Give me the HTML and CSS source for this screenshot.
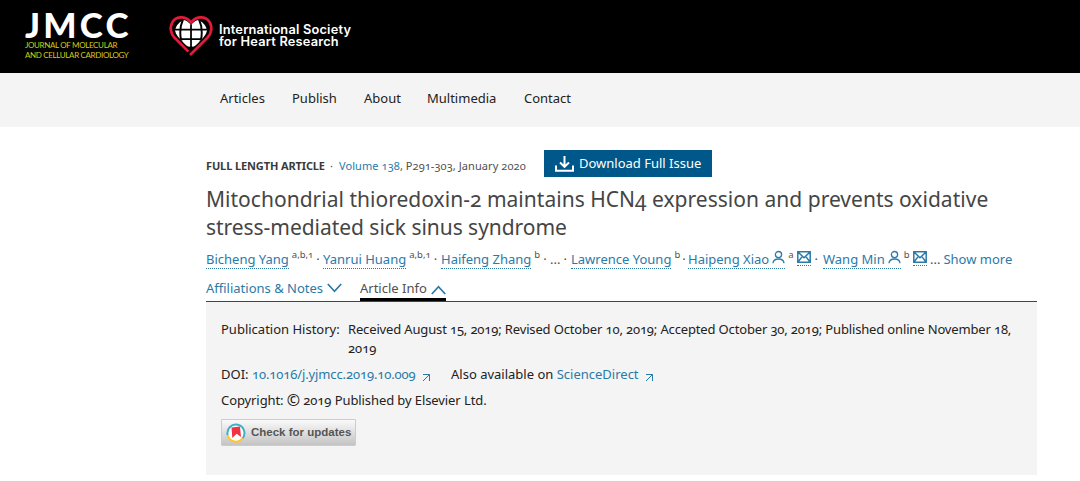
FILE: index.html
```html
<!DOCTYPE html>
<html lang="en">
<head>
    <meta charset="UTF-8">
    <title>Mitochondrial thioredoxin-2 maintains HCN4 expression - JMCC</title>
    <link rel="stylesheet" href="styles.css">
</head>
<body>
    <svg class="sprite" aria-hidden="true">
        <symbol id="icon-person" viewBox="0 0 13 14">
            <circle cx="6.5" cy="4.6" r="3.1" />
            <path d="M1 13.2c.2-3 2.200-4.200 5.500-4.200s5.300 1.200 5.500 4.200" />
        </symbol>
        <symbol id="icon-mail" viewBox="0 0 14 12">
            <path d="M.8.8h12.400v10.400H.800zM1 1l6 5.800L13 1M1 11l4.300-5.600M13 11L8.700 5.400" />
        </symbol>
        <symbol id="icon-out" viewBox="0 0 9 9">
            <path d="M1 1.500h6.500V8M7.500 1.500L1 8" />
        </symbol>
    </svg>

    <header class="header">
        <a class="jmcc" href="#">
            <span class="jmcc-name">JMCC</span>
            <span class="jmcc-line">JOURNAL OF MOLECULAR</span>
            <span class="jmcc-line">AND CELLULAR CARDIOLOGY</span>
        </a>
        <a class="society" href="#">
            <svg class="heart" viewBox="0 0 46 42">
                <defs>
                    <clipPath id="globe">
                        <path d="M14 5c3 0 6 2 8.500 5C25 7 28 5 31 5c5 0 8 3 8 9 0 7-7 12.500-16.500 21.500C13 26.500 6 21 6 14c0-6 3-9 8-9z" />
                    </clipPath>
                </defs>
                <g clip-path="url(#globe)">
                    <ellipse cx="22.500" cy="18" rx="16.500" ry="14.500" fill="#fff" />
                    <path d="M22.500 2v36M4 15h37M4 24.800h37" />
                    <ellipse class="meridian" cx="22.500" cy="18" rx="11" ry="20" />
                </g>
                <path class="outline" d="M19.800 37.500L5.500 23C1.500 19 .8 12.500 3 8.200 6.500 1.200 16 .2 22.500 7.500 29 .2 38.500 1.200 42 8.200c2.300 4.300 1.500 10.800-2.500 14.800L21.500 41" />
            </svg>
            <span class="society-name"><span>International Society</span><span>for Heart Research</span></span>
        </a>
    </header>

    <nav class="nav">
        <a class="n1" href="#">Articles</a>
        <a class="n2" href="#">Publish</a>
        <a class="n3" href="#">About</a>
        <a class="n4" href="#">Multimedia</a>
        <a class="n5" href="#">Contact</a>
    </nav>

    <main class="article">
        <div class="meta">
            <strong>FULL LENGTH ARTICLE</strong>
            <span class="dot">·</span>
            <span class="issue"><a href="#">Volume 138</a>, P291-303, January 2020</span>
            <a class="download" href="#">
                <svg width="19" height="16" viewBox="0 0 19 16"><path d="M9.500 0v10.500M5 6.500l4.500 4.300L14 6.500M1 9.500v5.200h17V9.500" /></svg>
                <span>Download Full Issue</span>
            </a>
        </div>

        <h1><span class="title-one">Mitochondrial thioredoxin-2 maintains HCN4 expression and prevents oxidative</span> <span class="title-two">stress-mediated sick sinus syndrome</span></h1>

        <div class="authors">
            <span class="author a1"><a href="#">Bicheng Yang</a><sup>a,b,1</sup><i>·</i></span>
            <span class="author a2"><a href="#">Yanrui Huang</a><sup>a,b,1</sup><i>·</i></span>
            <span class="author a3"><a href="#">Haifeng Zhang</a><sup>b</sup><i>·</i></span>
            <span class="author a4">...<i>·</i></span>
            <span class="author a5"><a href="#">Lawrence Young</a><sup>b</sup><i>·</i></span>
            <span class="author a6"><a href="#">Haipeng Xiao<svg class="person"><use href="#icon-person" /></svg></a><sup>a</sup><a class="mail" href="#"><svg><use href="#icon-mail" /></svg></a><i>·</i></span>
            <span class="author a7"><a href="#">Wang Min<svg class="person"><use href="#icon-person" /></svg></a><sup>b</sup><a class="mail" href="#"><svg><use href="#icon-mail" /></svg></a></span>
            <span class="author a8">... <a class="more" href="#">Show more</a></span>
        </div>

        <div class="tabs">
            <a class="tab" href="#">Affiliations &amp; Notes<svg viewBox="0 0 15 10"><path d="M.8 1l6.700 7.300L14.200 1" /></svg></a>
            <a class="tab active" href="#">Article Info<svg viewBox="0 0 15 10"><path d="M.8 9l6.700-7.300L14.200 9" /></svg></a>
        </div>

        <section class="info">
            <div class="history">
                <span class="label">Publication History:</span>
                <span class="dates"><span class="dates-line">Received August 15, 2019; Revised October 10, 2019; Accepted October 30, 2019; Published online November 18,</span> 2019</span>
            </div>
            <div class="doi">
                <span class="doi-link">DOI: <a href="#">10.1016/j.yjmcc.2019.10.009</a><svg><use href="#icon-out" /></svg></span>
                <span class="direct">Also available on <a href="#">ScienceDirect</a><svg><use href="#icon-out" /></svg></span>
            </div>
            <div class="copyright">Copyright: <span class="sign">©</span> 2019 Published by Elsevier Ltd.</div>
            <a class="updates" href="#">
                <svg width="20" height="20" viewBox="0 0 20 20">
                    <circle cx="10" cy="10" r="8.500" fill="#fff" />
                    <path d="M1.700 12.300A8.500 8.500 0 1 1 16.600 15.400" fill="none" stroke="#3eb1c8" stroke-width="2" />
                    <path d="M1.700 12.300A8.500 8.500 0 0 0 16.600 15.400" fill="none" stroke="#ffc72c" stroke-width="2" />
                    <path d="M5.500 4.500l8.500-1 1 10.500-4.300-3.200L6.300 15z" fill="#ef3340" />
                </svg>
                <span>Check for updates</span>
            </a>
        </section>
    </main>
</body>
</html>
```
FILE: styles.css
```css
:root {
    --link: #2a7aa8;
    --text: #505050;
    --dark: #222;
    --panel: #f4f4f4;
    --button: #00578a;
}

* {
    box-sizing: border-box;
}

body {
    margin: 0;
    background: #fff;
    color: var(--text);
    font-family: "Noto Sans", sans-serif;
    font-size: 13px;
    font-variant-numeric: oldstyle-nums;
    white-space: nowrap;
}

a {
    color: var(--link);
    text-decoration: none;
}

svg {
    flex: none;
    fill: none;
}

.sprite {
    display: none;
}

.header {
    display: flex;
    height: 73px;
    padding-left: 25px;
    background: #000;
}

.jmcc {
    display: flex;
    flex-direction: column;
    width: 144px;
    padding-top: 9px;
    font-family: Lato, sans-serif;
}

.jmcc-name {
    color: #fff;
    font-size: 35px;
    font-weight: 900;
    letter-spacing: 3.200px;
    line-height: 31px;
}

.jmcc-line {
    color: #d2cc1a;
    font-size: 8px;
    letter-spacing: -0.350px;
    line-height: 10px;
}

.society {
    display: flex;
    padding-top: 15px;
}

.heart {
    width: 45px;
    height: 41px;
}

.heart path {
    stroke: #000;
    stroke-width: 1.800;
}

.heart .meridian {
    stroke: #000;
    stroke-width: 2;
}

.heart .outline {
    stroke: #e31b3b;
    stroke-width: 2.800;
}

.society-name {
    display: flex;
    flex-direction: column;
    margin: 9px 0 0 5px;
    color: #fff;
    font-family: Inter, sans-serif;
    font-size: 12.800px;
    font-weight: 600;
    letter-spacing: 0.200px;
    line-height: 12px;
}

.nav {
    display: flex;
    height: 54px;
    padding: 0 0 4px 220px;
    align-items: center;
    background: var(--panel);
}

.nav a {
    color: var(--dark);
}

.n1 {
    width: 72px;
}

.n2 {
    width: 72px;
}

.n3 {
    width: 63px;
}

.n4 {
    width: 97px;
}

.article {
    width: 831px;
    margin-left: 206px;
}

.meta {
    display: flex;
    height: 50px;
    padding-top: 23px;
    align-items: flex-start;
    font-size: 11px;
    line-height: 31px;
}

.meta strong {
    width: 124px;
    color: #3a3a3a;
    letter-spacing: -0.120px;
}

.meta .dot {
    width: 9px;
}

.issue {
    width: 205px;
    letter-spacing: 0.080px;
}

.download {
    display: flex;
    width: 168px;
    height: 27px;
    padding-left: 11px;
    align-items: center;
    gap: 5px;
    background: var(--button);
    color: #fff;
    font-size: 13px;
}

.download path {
    stroke: #fff;
    stroke-width: 2;
}

h1 {
    margin: 8px 0 0;
    color: #454545;
    font-size: 21px;
    font-weight: 400;
    line-height: 28px;
}

h1 span {
    display: block;
}

.title-one {
    letter-spacing: 0.020px;
}

.title-two {
    letter-spacing: -0.040px;
}

.authors {
    display: flex;
    height: 29px;
    margin-top: 6px;
}

.author {
    display: flex;
    line-height: 25px;
}

.author a {
    display: flex;
    height: 22px;
    border-bottom: 1px dotted var(--link);
}

.author i {
    margin-left: 3px;
    font-style: normal;
}

.author sup {
    margin-left: 3px;
    font-size: 9.500px;
    line-height: 16px;
}

.person {
    width: 13px;
    height: 14px;
    margin: 3px 0 0 3px;
    stroke: var(--link);
    stroke-width: 1.300;
}

.author .mail {
    margin-left: 3px;
    height: 19px;
}

.mail svg {
    width: 14px;
    height: 12px;
    margin-top: 4px;
    stroke: var(--link);
    stroke-width: 1.500;
}

.author .more {
    margin-left: 3px;
    border: 0;
}

.a1 {
    width: 117px;
}

.a2 {
    width: 118px;
}

.a3 {
    width: 109px;
}

.a4 {
    width: 21px;
}

.a5 {
    width: 117px;
}

.a5 i {
    margin-left: 2px;
}

.a6 {
    width: 135px;
}

.a6 > i {
    margin-left: 4px;
}

.a7 {
    width: 107px;
}

.tabs {
    display: flex;
    height: 26px;
    border-bottom: 1px solid #444;
}

.tab {
    display: flex;
    width: 154px;
    height: 25px;
    line-height: 25px;
}

.tab svg {
    width: 15px;
    height: 10px;
    margin: 7px 0 0 4px;
    stroke: var(--link);
    stroke-width: 1.700;
}

.tab.active {
    width: 86px;
    border-bottom: 3px solid #000;
    color: var(--text);
}

.tab.active svg {
    margin-top: 9px;
}

.info {
    height: 173px;
    padding: 18px 15px 0;
    background: var(--panel);
    color: var(--dark);
    line-height: 19px;
}

.history {
    display: flex;
    height: 38px;
}

.label {
    width: 127px;
    flex: none;
}

.dates-line {
    display: block;
    letter-spacing: -0.150px;
}

.doi {
    display: flex;
    margin-top: 7px;
}

.doi-link {
    width: 230px;
}

.doi-link a {
    letter-spacing: -0.120px;
}

.doi svg {
    width: 9px;
    height: 9px;
    margin-left: 6px;
    vertical-align: -3px;
    stroke: var(--link);
}

.copyright {
    height: 19px;
    margin-top: 7px;
    letter-spacing: -0.090px;
}

.sign {
    font-size: 16px;
    vertical-align: -1px;
    line-height: 1;
}

.updates {
    display: flex;
    width: 135px;
    height: 27px;
    margin-top: 9px;
    padding-left: 4px;
    align-items: center;
    gap: 5px;
    border: 1px solid #ccc;
    border-radius: 1px;
    background: linear-gradient(#fafafa, #c4c4c4);
    color: #555;
    font-family: "Liberation Sans", Arial, sans-serif;
    font-size: 11.500px;
    font-weight: 700;
}
```
